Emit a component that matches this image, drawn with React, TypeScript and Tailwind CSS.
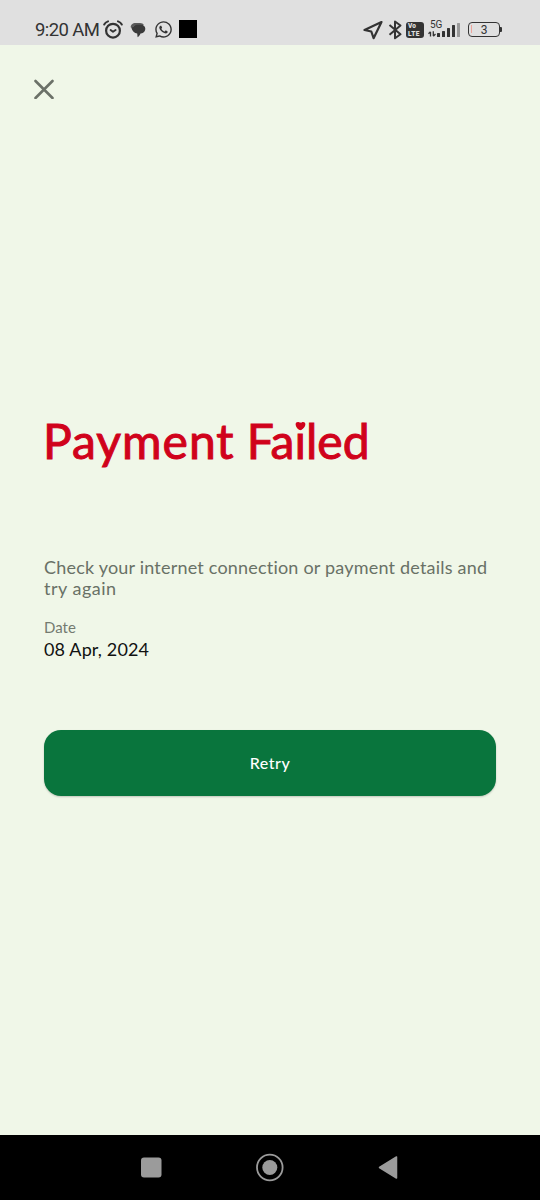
import clsx from "clsx";
import { FaWhatsapp } from "react-icons/fa";

const SIGNAL_BARS = ["h-[4px]", "h-[6px]", "h-[9px]", "h-[12px]", "h-[14px]"];

function AlarmIcon() {
  return (
    <svg width="20" height="20" viewBox="0 0 20 20" fill="none" stroke="#333" strokeLinecap="round">
      <circle cx="10" cy="10.7" r="6.9" strokeWidth="2.2" />
      <path d="M7.6 10 10 11.800l2.600-1.800" strokeWidth="1.9" strokeLinejoin="round" />
      <path d="M1.2 4.500Q2.300 2.300 5 1.400M18.800 4.500Q17.700 2.300 15 1.400" strokeWidth="2" />
    </svg>
  );
}

function ChatIcon() {
  return (
    <svg width="16" height="16" viewBox="0 0 16 16" fill="#3a3a3a">
      <path d="M.8 5.500C.3 3 2.800 1 5.500 1H10c2 0 3.300.8 3.900 2H7C4.800 3 3.500 4 3.200 6Z" opacity=".8" />
      <path d="M7 2.800h4c2.700 0 4.300 1.700 4.300 4S13.500 11.500 11 11.500h-.5c-.4 1.600-1.400 2.700-2.900 3.700L7.200 11.500C4.300 11.300 2.300 9 1.300 5.500l2-.5C4 3.500 5.200 2.800 7 2.800Z" />
    </svg>
  );
}

function StatusBar() {
  return (
    <header className="flex h-[45px] shrink-0 items-start bg-[#e0e0e0] pt-5 pl-[35px] pr-[38px] text-[#333]">
      <span className="w-[66px] whitespace-nowrap font-[Roboto] text-[18.5px] leading-5 tracking-[-0.6px]">
        9:20 AM
      </span>
      <span className="ml-0.5"><AlarmIcon /></span>
      <span className="ml-[7px] mt-[2px]"><ChatIcon /></span>
      <FaWhatsapp className="ml-[8px] size-[19px]" />
      <span className="ml-[6px] size-[18px] bg-black" />

      <div className="ml-auto flex items-start">
        <svg width="20" height="20" viewBox="0 0 20 20" fill="none" stroke="#333" strokeWidth="2.200" strokeLinejoin="round">
          <path d="M18.500 2 1.500 10l6.800 1.500 2.300 6.700Z" />
        </svg>
        <svg className="ml-[5px]" width="14" height="20" viewBox="0 0 14 20" fill="none" stroke="#333" strokeWidth="2" strokeLinejoin="round">
          <path d="m1.500 5 11 9.300-5.500 4V1.500l5.500 4-11 9.300" />
        </svg>
        <span className="ml-[4px] mt-[2px] flex h-[16px] w-[18px] flex-col items-start rounded-[3px] bg-[#333] pt-px pl-[2px] font-[Roboto] text-[6.5px] font-black text-[#e0e0e0]">
          <span className="leading-[7px]">Vo</span>
          <span className="mt-px leading-[6px] tracking-[0.4px]">LTE</span>
        </span>
        <div className="relative ml-[4px] h-[20px] w-[33px]">
          <span className="absolute top-[-1px] left-[2px] font-[Roboto] text-[10px] leading-[11px]">5G</span>
          <svg className="absolute bottom-[3px] left-0" width="8" height="6" viewBox="0 0 8 6" fill="none" stroke="#333" strokeWidth="1.300">
            <path d="M2.500 5.500V1M.5 2.800 2.500.8M5.300.3V5M7.500 3 5.300 5.200" />
          </svg>
          <div className="absolute bottom-[3px] left-[9px] flex items-end gap-[2px]">
            {SIGNAL_BARS.map((height, idx) => (
              <span
                key={idx}
                className={clsx("w-[3px] rounded-[0.5px]", height, idx === 4 ? "bg-[#999]" : "bg-[#333]")}
              />
            ))}
          </div>
        </div>
        <div className="ml-[7px] mt-[2px] flex items-center">
          <span className="relative flex h-[15px] w-[32px] items-center justify-center rounded-[4px] border-[1.500px] border-[#333] font-[Roboto] text-[12px] leading-none">
            <span className="absolute top-[2px] left-[2px] h-[8px] w-px bg-[#eda49b]" />
            3
          </span>
          <span className="h-[5px] w-[2px] rounded-r-[1px] bg-[#333]" />
        </div>
      </div>
    </header>
  );
}

function NavBar() {
  return (
    <nav className="h-[65px] shrink-0 bg-black">
      <svg width="540" height="65" viewBox="0 0 540 65" fill="#9b9b9b">
        <rect x="141" y="22.500" width="20.500" height="20" rx="3" />
        <circle cx="269.800" cy="32.500" r="12.800" fill="none" stroke="#9b9b9b" strokeWidth="1.800" />
        <circle cx="269.800" cy="32.500" r="7.500" />
        <path d="m379.500 32.500 17-10.500v21Z" stroke="#9b9b9b" strokeWidth="1.500" strokeLinejoin="round" />
      </svg>
    </nav>
  );
}

export default function App() {
  return (
    <div className="flex h-[1200px] w-[540px] flex-col overflow-hidden bg-[#f0f7e8] font-[Lato,sans-serif] [font-variant-ligatures:none]">
      <StatusBar />

      <main className="flex flex-1 flex-col px-11">
        <button aria-label="Close" className="mt-[34px] -ml-2.5 size-5">
          <svg width="20" height="20" viewBox="0 0 20 20" stroke="#6b7168" strokeWidth="2.600" strokeLinecap="round">
            <path d="m1.500 2 17 17M18.500 2 1.500 19" />
          </svg>
        </button>

        <h1 className="mt-[310px] -ml-px h-[64px] whitespace-nowrap text-[48px] leading-[64px] tracking-[1px] text-[#d0021b] [-webkit-text-stroke:1px_#d0021b]">
          Payment{" "}
          <span className="-ml-px tracking-[0px]">
            Fa
            <span className="relative">
              i
              {/* heart over the dot */}
              <svg className="absolute top-[9px] left-px" width="11" height="10" viewBox="0 0 9 8" fill="#d0021b">
                <path d="M4.500 7.500C2 6 .5 4.500.5 2.500.5.200 3.500 0 4.500 2c1-2 4-1.800 4 .5 0 2-1.500 3.500-4 5Z" />
              </svg>
            </span>
            led
          </span>
        </h1>

        <p className="mt-[84px] text-[18px] leading-[21px] text-[#697166]">
          <span className="block whitespace-nowrap tracking-[0.2px]">Check your internet connection or payment details and</span>
          <span className="block tracking-[0.5px]">try again</span>
        </p>
        <p className="mt-[18px] text-[15px] leading-5 text-[#747b70]">Date</p>
        <p className="mt-px text-[18px] leading-[22px] tracking-[0.15px] text-[#111]">08 Apr, 2024</p>

        <button className="mt-[69.500px] h-[66px] w-full rounded-[17px] bg-[#09753d] text-[16px] font-medium tracking-[0.5px] text-white shadow-[0_1px_2px_rgba(0,0,0,0.2)]">
          Retry
        </button>
      </main>

      <NavBar />
    </div>
  );
}
